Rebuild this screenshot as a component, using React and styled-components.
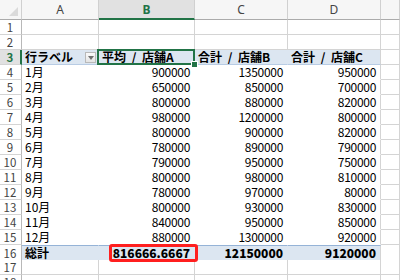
import React from 'react';
import styled, { createGlobalStyle } from 'styled-components';

const Global = createGlobalStyle`
  html, body { margin: 0; padding: 0; background: #fff; }
  body { font-family: "Noto Sans CJK JP", "Liberation Sans", sans-serif; }
`;

const COLS = '22px 77px 96px 93px 93px 19px';
const GRID = '#d4d4d4';
const GREEN = '#217346';
const PIVOT_BLUE = '#dce6f1';
const PIVOT_LINE = '#95b3d7';

const Sheet = styled.div`
  width: 400px;
  height: 280px;
  overflow: hidden;
  background: #fff;
`;

const Row = styled.div`
  display: grid;
  grid-template-columns: ${COLS};
  height: ${(p) => (p.$head ? 20 : 15)}px;
`;

const ColHead = styled.div`
  box-sizing: border-box;
  display: flex;
  align-items: center;
  justify-content: center;
  position: relative;
  font-family: "Noto Sans", "Liberation Sans", sans-serif;
  font-size: 12px;
  line-height: 14px;
  color: ${(p) => (p.$active ? GREEN : '#444')};
  font-weight: ${(p) => (p.$active ? 700 : 400)};
  background: ${(p) => (p.$active ? '#e1e1e1' : '#f6f6f6')};
  border-right: 1px solid #d0d0d0;
  border-bottom: ${(p) => (p.$active ? `2px solid ${GREEN}` : '1px solid #ababab')};
  padding-top: 1px;
`;

const Corner = styled(ColHead)`
  &::after {
    content: '';
    position: absolute;
    right: 3px;
    bottom: 3px;
    border-style: solid;
    border-width: 0 0 9px 9px;
    border-color: transparent transparent #dadada transparent;
  }
`;

const RowHead = styled.div`
  box-sizing: border-box;
  display: flex;
  align-items: center;
  justify-content: center;
  font-family: "Noto Sans CJK JP", sans-serif;
  font-size: 11.5px;
  line-height: 14px;
  color: ${(p) => (p.$active ? GREEN : '#444')};
  font-weight: ${(p) => (p.$active ? 700 : 400)};
  background: ${(p) => (p.$active ? '#e1e1e1' : '#fff')};
  border-bottom: 1px solid ${GRID};
  border-right: ${(p) => (p.$active ? `2px solid ${GREEN}` : '1px solid #b8b8b8')};
  padding-right: ${(p) => (p.$active ? 0 : 1)}px;
`;

const Cell = styled.div`
  box-sizing: border-box;
  position: relative;
  display: flex;
  align-items: center;
  justify-content: ${(p) => (p.$right ? 'flex-end' : 'flex-start')};
  padding: 0 ${(p) => (p.$right ? 4 : 0)}px 0 ${(p) => (p.$right ? 0 : 3)}px;
  font-size: 12px;
  line-height: 14px;
  color: #000;
  white-space: nowrap;
  word-spacing: ${(p) => (p.$bold ? 3 : 0)}px;
  font-weight: ${(p) => (p.$bold ? 700 : 400)};
  background: ${(p) => p.$bg || '#fff'};
  border-right: 1px solid ${(p) => (p.$noRight ? 'transparent' : GRID)};
  border-bottom: 1px solid ${(p) => (p.$noBottom ? 'transparent' : GRID)};
  border-top: ${(p) => (p.$topLine ? `1px solid ${PIVOT_LINE}` : 'none')};
  ${(p) => p.$headLine && `border-bottom: 1px solid #b8cce4;`}
`;

const Num = styled.span`
  font-family: "Noto Sans CJK JP", sans-serif;
  letter-spacing: ${(p) => (p.$bold ? '0' : '-0.3px')};
  font-weight: ${(p) => (p.$bold ? 900 : 400)};
`;

const Selection = styled.div`
  position: absolute;
  z-index: 5;
  left: -2px;
  top: -1px;
  right: -1px;
  bottom: -1px;
  border: 2px solid ${GREEN};
  pointer-events: none;
  &::after {
    content: '';
    position: absolute;
    right: -5px;
    bottom: -5px;
    width: 5px;
    height: 5px;
    background: ${GREEN};
    border: 1px solid #fff;
  }
`;

const DropButton = styled.div`
  position: absolute;
  right: 2px;
  top: 2px;
  width: 11px;
  height: 11px;
  box-sizing: border-box;
  border: 1px solid #b9b9b9;
  background: linear-gradient(#fafafa, #e4e4e4);
  display: flex;
  align-items: center;
  justify-content: center;
  &::after {
    content: '';
    border-style: solid;
    border-width: 4px 3px 0 3px;
    border-color: #707070 transparent transparent transparent;
  }
`;

const Highlight = styled.div`
  position: absolute;
  z-index: 5;
  left: 10px;
  top: -2px;
  right: -4px;
  bottom: -2px;
  border: 3px solid #ff1f1f;
  border-radius: 3px;
  pointer-events: none;
`;

const months = [
  ['1月', 900000, 1350000, 950000],
  ['2月', 650000, 850000, 700000],
  ['3月', 800000, 880000, 820000],
  ['4月', 980000, 1200000, 800000],
  ['5月', 800000, 900000, 820000],
  ['6月', 780000, 890000, 790000],
  ['7月', 790000, 950000, 750000],
  ['8月', 800000, 980000, 810000],
  ['9月', 780000, 970000, 80000],
  ['10月', 800000, 930000, 830000],
  ['11月', 840000, 950000, 850000],
  ['12月', 880000, 1300000, 920000],
];

const BlankRow = ({ n }) => (
  <Row>
    <RowHead>{n}</RowHead>
    <Cell />
    <Cell />
    <Cell />
    <Cell />
    <Cell />
  </Row>
);

const App = () => (
  <Sheet>
    <Global />
    <Row $head>
      <Corner />
      <ColHead>A</ColHead>
      <ColHead $active>B</ColHead>
      <ColHead>C</ColHead>
      <ColHead>D</ColHead>
      <ColHead />
    </Row>
    <BlankRow n={1} />
    <BlankRow n={2} />
    <Row>
      <RowHead $active>3</RowHead>
      <Cell $bg={PIVOT_BLUE} $bold $noRight $headLine>
        行ラベル
        <DropButton />
      </Cell>
      <Cell $bg={PIVOT_BLUE} $bold $noRight $headLine>
        平均 / 店舗A
        <Selection />
      </Cell>
      <Cell $bg={PIVOT_BLUE} $bold $noRight $headLine>合計 / 店舗B</Cell>
      <Cell $bg={PIVOT_BLUE} $bold $headLine>合計 / 店舗C</Cell>
      <Cell />
    </Row>
    {months.map(([m, a, b, c], i) => (
      <Row key={m}>
        <RowHead>{i + 4}</RowHead>
        <Cell $noRight $noBottom>{m}</Cell>
        <Cell $right $noRight $noBottom><Num>{a}</Num></Cell>
        <Cell $right $noRight $noBottom><Num>{b}</Num></Cell>
        <Cell $right $noBottom><Num>{c}</Num></Cell>
        <Cell />
      </Row>
    ))}
    <Row>
      <RowHead>16</RowHead>
      <Cell $bg={PIVOT_BLUE} $bold $noRight $noBottom $topLine>総計</Cell>
      <Cell $bg={PIVOT_BLUE} $right $noRight $noBottom $topLine>
        <Num $bold>816666.6667</Num>
        <Highlight />
      </Cell>
      <Cell $bg={PIVOT_BLUE} $right $noRight $noBottom $topLine><Num $bold>12150000</Num></Cell>
      <Cell $bg={PIVOT_BLUE} $right $noBottom $topLine><Num $bold>9120000</Num></Cell>
      <Cell />
    </Row>
    <BlankRow n={17} />
    <BlankRow n={18} />
  </Sheet>
);

export default App;
